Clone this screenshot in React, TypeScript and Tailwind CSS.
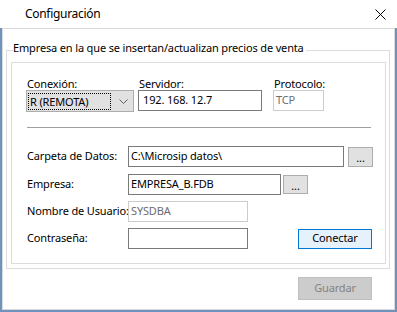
import React from "react";

const F = { fontFamily: '"Noto Sans", "Open Sans", sans-serif' };

function Chevron() {
  return (
    <svg width="9" height="5" viewBox="0 0 9 5" className="block">
      <polyline points="0.5,0.5 4.5,4.5 8.5,0.5" fill="none" stroke="#606060" strokeWidth="1" />
    </svg>
  );
}

function CloseX() {
  return (
    <svg width="11" height="11" viewBox="0 0 11 11" className="block">
      <line x1="0.5" y1="0.5" x2="10.5" y2="10.5" stroke="#000" strokeWidth="1" />
      <line x1="10.5" y1="0.5" x2="0.5" y2="10.5" stroke="#000" strokeWidth="1" />
    </svg>
  );
}

export default function App() {
  return (
    <div
      className="w-[397px] h-[312px] bg-white flex flex-col text-[11px] tracking-[-0.15px] text-black overflow-hidden"
      style={F}
    >
      {/* Title bar */}
      <div className="h-[28px] flex items-center justify-between pl-[25px] pr-[11px] shrink-0">
        <span className="text-[12px] leading-[16px] tracking-[-0.3px]">Configuración</span>
        <CloseX />
      </div>

      {/* Window body */}
      <div className="flex-1 border-x-2 border-b-2 border-[#6f93bd] flex flex-col">
        <div className="flex-1 border border-[#dadada] flex flex-col">
          {/* Group box */}
          <div className="mt-[21px] ml-[3px] w-[384px] h-[219px] border border-[#dcdcdc] flex flex-col">
            <span className="-mt-[11px] ml-[6px] pr-[2px] bg-white w-fit leading-[15px] whitespace-nowrap">
              Empresa en la que se insertan/actualizan precios de venta
            </span>

            {/* Inner frame */}
            <div className="mt-[7px] ml-[4px] w-[375px] h-[202px] border border-[#dcdcdc] flex flex-col">
              {/* Row 1 */}
              <div className="mt-[15px] ml-[14px] flex">
                <div className="w-[108px] flex flex-col">
                  <span className="h-[12px] leading-[12px] pl-[1px]">Conexión:</span>
                  <div className="h-[22px] bg-[#e1e1e1] border border-[#adadad] flex items-center pl-[1px] pr-[5px]">
                    <div className="h-[17px] w-[83px] border border-dotted border-black flex items-center pl-[1px] leading-[15px] whitespace-nowrap">
                      R (REMOTA)
                    </div>
                    <div className="flex-1 flex justify-end">
                      <Chevron />
                    </div>
                  </div>
                </div>
                <div className="ml-[4px] w-[124px] flex flex-col">
                  <span className="h-[12px] leading-[12px] pl-[1px]">Servidor:</span>
                  <div className="h-[21px] border border-[#7a7a7a] flex items-center pl-[4px] whitespace-nowrap">
                    192. 168. 12.7
                  </div>
                </div>
                <div className="ml-[11px] w-[51px] flex flex-col">
                  <span className="h-[12px] leading-[12px] pl-[1px]">Protocolo:</span>
                  <div className="h-[21px] border border-[#cccccc] flex items-center pl-[2px] text-[#6d6d6d]">
                    TCP
                  </div>
                </div>
              </div>

              {/* Separator */}
              <div className="mt-[15px] ml-[15px] w-[344px] h-px bg-[#a0a0a0]" />

              {/* Carpeta */}
              <div className="mt-[18px] ml-[15px] h-[21px] flex items-center">
                <span className="w-[101px] whitespace-nowrap">Carpeta de Datos:</span>
                <div className="w-[216px] h-[21px] border border-[#7a7a7a] flex items-center pl-[2px] whitespace-nowrap">
                  {"C:\\Microsip datos\\"}
                </div>
                <button className="ml-[4px] w-[25px] h-[20px] bg-[#e1e1e1] border border-[#adadad] flex items-center justify-center leading-[14px] pt-[3px]">
                  ...
                </button>
              </div>

              {/* Empresa */}
              <div className="mt-[7px] ml-[15px] h-[21px] flex items-center">
                <span className="w-[101px] whitespace-nowrap">Empresa:</span>
                <div className="w-[153px] h-[21px] border border-[#7a7a7a] flex items-center pl-[2px] whitespace-nowrap">
                  EMPRESA_B.FDB
                </div>
                <button className="ml-[2px] w-[25px] h-[19px] bg-[#e1e1e1] border border-[#adadad] flex items-center justify-center leading-[14px] pt-[3px]">
                  ...
                </button>
              </div>

              {/* Usuario */}
              <div className="mt-[6px] ml-[15px] h-[21px] flex items-center">
                <span className="w-[101px] whitespace-nowrap">Nombre de Usuario:</span>
                <div className="w-[120px] h-[21px] border border-[#cccccc] flex items-center pl-[2px] text-[#6d6d6d]">
                  SYSDBA
                </div>
              </div>

              {/* Contraseña */}
              <div className="mt-[6px] ml-[15px] h-[21px] flex items-center">
                <span className="w-[101px] whitespace-nowrap">Contraseña:</span>
                <div className="w-[120px] h-[21px] border border-[#7a7a7a]" />
                <button className="ml-[50px] w-[74px] h-[20px] bg-[#e5f1fb] border border-[#0078d7] flex items-center justify-center">
                  Conectar
                </button>
              </div>
            </div>
          </div>

          {/* Bottom buttons */}
          <div className="mt-[8px] flex justify-end pr-[22px]">
            <button className="w-[74px] h-[23px] bg-[#cccccc] border border-[#bfbfbf] text-[#838383] flex items-center justify-center">
              Guardar
            </button>
          </div>
        </div>
      </div>
    </div>
  );
}
